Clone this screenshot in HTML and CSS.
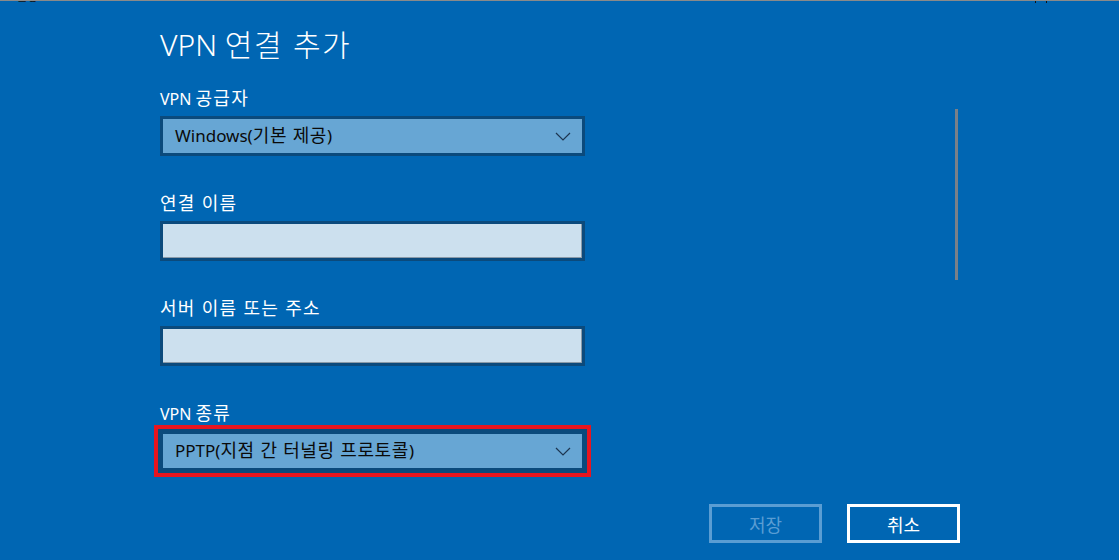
FILE: index.html
```html
<!DOCTYPE html>
<html lang="ko">
<head>
<meta charset="utf-8">
<title>VPN 연결 추가</title>
<link rel="stylesheet" href="styles.css">
</head>
<body>
<div class="page">
  <div class="titlebar">
    <span class="app-name">설정</span>
    <span class="win-ctrls"><span class="ctrl-box"></span><span class="ctrl-x">✕</span></span>
  </div>
  <div class="scrollarea">
    <div class="form">
      <h1 class="title">VPN <span class="ko">연결 추가</span></h1>
      <div class="group">
        <div class="label">VPN <span class="ko">공급자</span></div>
        <div class="dropdown">
          <span class="value">Windows(<span class="ko">기본 제공</span>)</span>
          <svg class="chev" width="16" height="9" viewBox="0 0 16 9"><path d="M1 1 L8 8 L15 1" fill="none" stroke="#1d3550" stroke-width="1.2"/></svg>
        </div>
      </div>
      <div class="group">
        <div class="label"><span class="ko">연결 이름</span></div>
        <div class="textbox"></div>
      </div>
      <div class="group">
        <div class="label"><span class="ko">서버 이름 또는 주소</span></div>
        <div class="textbox"></div>
      </div>
      <div class="group">
        <div class="label">VPN <span class="ko">종류</span></div>
        <div class="dropdown highlighted">
          <span class="value">PPTP(<span class="ko">지점 간 터널링 프로토콜</span>)</span>
          <svg class="chev" width="16" height="9" viewBox="0 0 16 9"><path d="M1 1 L8 8 L15 1" fill="none" stroke="#1d3550" stroke-width="1.2"/></svg>
        </div>
      </div>
    </div>
    <div class="scrollbar"></div>
  </div>
  <div class="buttons">
    <div class="btn disabled"><span class="ko">저장</span></div>
    <div class="btn"><span class="ko">취소</span></div>
  </div>
</div>
</body>
</html>
```
FILE: styles.css
```css
html, body {
  margin: 0;
  padding: 0;
}
body {
  background: #0066b3;
  font-family: "Noto Sans", "Noto Sans CJK KR", sans-serif;
  width: 1119px;
  height: 560px;
  overflow: hidden;
}
.ko {
  font-family: "Noto Sans CJK KR", sans-serif;
  font-size: 1.125em;
  line-height: 0;
}
.page {
  display: flex;
  flex-direction: column;
}
.titlebar {
  height: 2px;
  border-top: 1px solid #8a8a8a;
  overflow: hidden;
  display: flex;
  justify-content: space-between;
  font-size: 12px;
  line-height: 12px;
  color: #111;
}
.app-name {
  margin-top: -11px;
  margin-left: 16px;
  font-family: "Noto Sans CJK KR", sans-serif;
}
.win-ctrls {
  display: flex;
  margin-right: 17px;
  gap: 45px;
}
.ctrl-box {
  width: 10px;
  height: 10px;
  margin-top: -9px;
  border: 1px solid #111;
}
.ctrl-x {
  margin-top: -11px;
  font-size: 12px;
}
.scrollarea {
  display: flex;
  align-items: flex-start;
}
.form {
  padding-left: 160px;
  width: 425px;
  padding-top: 24px;
}
.title {
  margin: 0 0 26px 0;
  font-family: "Noto Sans Light", "Noto Sans", "Noto Sans CJK KR", sans-serif;
  font-size: 30px;
  line-height: 36px;
  font-weight: 300;
  color: #fff;
}
.title .ko {
  font-family: "Noto Sans CJK KR Light", "Noto Sans CJK KR DemiLight", "Noto Sans CJK KR", sans-serif;
  font-size: 30px;
  font-weight: 300;
  letter-spacing: 1.5px;
}
.group {
  display: flex;
  flex-direction: column;
  gap: 7px;
  margin-bottom: 38px;
}
.group:last-child {
  margin-bottom: 0;
}
.label {
  font-size: 16px;
  line-height: 20px;
  color: #fff;
}
.label .ko {
  letter-spacing: 1.2px;
}
.dropdown {
  box-sizing: border-box;
  height: 40px;
  border: 3px solid #0b4a7c;
  background: #67a6d4;
  display: flex;
  align-items: center;
  justify-content: space-between;
  padding: 0 11px 0 12px;
  font-size: 17px;
  line-height: 20px;
  color: #0a0a0a;
}
.dropdown .ko {
  font-size: 18px;
  letter-spacing: 0.6px;
}
.dropdown.highlighted {
  box-shadow: 0 0 0 2px #0b4a7c, 0 0 0 6px #e8151f;
}
.chev {
  display: block;
}
.textbox {
  box-sizing: border-box;
  height: 40px;
  border: 3px solid #0b4a7c;
  background: #cce0ee;
  box-shadow: inset -1px -1px 0 #8a9aa8;
}
.scrollbar {
  width: 3px;
  height: 171px;
  margin-top: 106px;
  margin-left: 370px;
  background: #7a8088;
}
.buttons {
  display: flex;
  justify-content: flex-end;
  gap: 25px;
  padding-right: 159px;
  margin-top: 33px;
}
.btn {
  box-sizing: border-box;
  width: 113px;
  height: 39px;
  border: 3px solid #fff;
  color: #fff;
  font-size: 16px;
  line-height: 20px;
  display: flex;
  align-items: center;
  justify-content: center;
}
.btn.disabled {
  border-color: #5a9dd3;
  color: #5a9dd3;
}
```
